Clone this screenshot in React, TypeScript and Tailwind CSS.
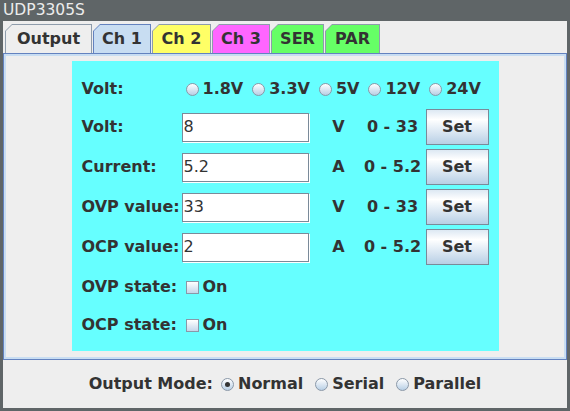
import type { ReactNode } from 'react';

const FONT = "font-['DejaVu_Sans',sans-serif]";

type Tab = { label: string; w: string; bg: string; selected?: boolean };

const TABS: Tab[] = [
  { label: 'Output', w: 'w-[87px]', bg: 'bg-[#eeeeee]' },
  { label: 'Ch 1', w: 'w-[58px]', bg: 'bg-[#c8ddf2]', selected: true },
  { label: 'Ch 2', w: 'w-[59px]', bg: 'bg-[#ffff66]' },
  { label: 'Ch 3', w: 'w-[58px]', bg: 'bg-[#ff66ff]' },
  { label: 'SER', w: 'w-[53px]', bg: 'bg-[#66ff66]' },
  { label: 'PAR', w: 'w-[55px]', bg: 'bg-[#66ff66]' },
];

function TabButton({ tab }: { tab: Tab }) {
  return (
    <div
      className={`${tab.w} h-full pt-px px-px ${tab.selected ? 'bg-[#6382bf]' : 'bg-[#8e9cab]'} [clip-path:polygon(7px_0,100%_0,100%_100%,0_100%,0_7px)]`}
    >
      <div
        className={`h-full ${tab.bg} flex items-center justify-center text-[16px] font-bold text-[#333333] [clip-path:polygon(6px_0,100%_0,100%_100%,0_100%,0_6px)]`}
      >
        {tab.label}
      </div>
    </div>
  );
}

function Radio({ label, checked }: { label: string; checked?: boolean }) {
  return (
    <div className="flex items-center gap-[4px]">
      <span className="relative size-[13px] rounded-full border border-[#8a98a8] bg-gradient-to-b from-[#ffffff] to-[#b8cfe5] shrink-0">
        {checked ? (
          <span className="absolute left-[3px] top-[3px] size-[5px] rounded-full bg-[#333333]" />
        ) : null}
      </span>
      <span>{label}</span>
    </div>
  );
}

function Check({ label }: { label: string }) {
  return (
    <div className="flex items-center gap-[4px] ml-[4px]">
      <span className="size-[13px] border border-[#8a98a8] bg-gradient-to-b from-[#ffffff] to-[#c4d6ea] shrink-0" />
      <span>{label}</span>
    </div>
  );
}

function Label({ children }: { children: ReactNode }) {
  return <div className="w-[100px] shrink-0 whitespace-nowrap">{children}</div>;
}

function ValueRow({ label, value, unit, range }: { label: string; value: string; unit: string; range: string }) {
  return (
    <div className="h-[36px] flex items-center">
      <Label>{label}</Label>
      <div className="w-[127px] h-[29px] border border-[#7a8a99] shadow-[1px_1px_0_#ffffff] bg-white flex items-center pl-[1px] font-normal">
        {value}
      </div>
      <div className="w-[60px] flex justify-center">{unit}</div>
      <div className="w-[48px] flex justify-center whitespace-nowrap">{range}</div>
      <button className="ml-[9px] w-[63px] h-[36px] border border-[#7a8a99] bg-[linear-gradient(to_bottom,#dde8f3_0%,#ffffff_28%,#e4edf6_55%,#b8cfe5_100%)] font-bold text-[#333333]">
        Set
      </button>
    </div>
  );
}

export default function App() {
  return (
    <div className={`${FONT} w-[570px] h-[411px] bg-[#5f6567] flex flex-col text-[#333333]`}>
      <div className="h-[21px] flex items-center pl-[3px] text-[15.5px] text-[#ececec]">UDP3305S</div>
      <div className="flex-1 mx-[3px] mb-[3px] bg-[#eeeeee] flex flex-col">
        <div className="h-[32px] pt-[3px] pl-[2px] flex gap-px">
          {TABS.map((t) => (
            <TabButton key={t.label} tab={t} />
          ))}
        </div>
        <div className="h-[307px] border border-[#6382bf] bg-[#c8ddf2] p-[2px]">
          <div className="h-full bg-[#eeeeee] pt-[5px]">
            <div className="mx-auto w-[427px] h-[290px] bg-[#66ffff] pl-[10px] pt-[10px] text-[16px] font-bold flex flex-col">
              <div className="h-[36px] flex items-center">
                <Label>Volt:</Label>
                <div className="ml-[4px] flex items-center gap-[9px]">
                  <Radio label="1.8V" />
                  <Radio label="3.3V" />
                  <Radio label="5V" />
                  <Radio label="12V" />
                  <Radio label="24V" />
                </div>
              </div>
              <div className="mt-[2px] flex flex-col gap-[4px]">
                <ValueRow label="Volt:" value="8" unit="V" range="0 - 33" />
                <ValueRow label="Current:" value="5.2" unit="A" range="0 - 5.2" />
                <ValueRow label="OVP value:" value="33" unit="V" range="0 - 33" />
                <ValueRow label="OCP value:" value="2" unit="A" range="0 - 5.2" />
              </div>
              <div className="mt-[4px] h-[36px] flex items-center">
                <Label>OVP state:</Label>
                <Check label="On" />
              </div>
              <div className="mt-[2px] h-[36px] flex items-center">
                <Label>OCP state:</Label>
                <Check label="On" />
              </div>
            </div>
          </div>
        </div>
        <div className="flex-1 flex items-center justify-center text-[16px] font-bold">
          <span className="mr-[8px]">Output Mode:</span>
          <div className="flex items-center gap-[12px]">
            <Radio label="Normal" checked />
            <Radio label="Serial" />
            <Radio label="Parallel" />
          </div>
        </div>
      </div>
    </div>
  );
}
